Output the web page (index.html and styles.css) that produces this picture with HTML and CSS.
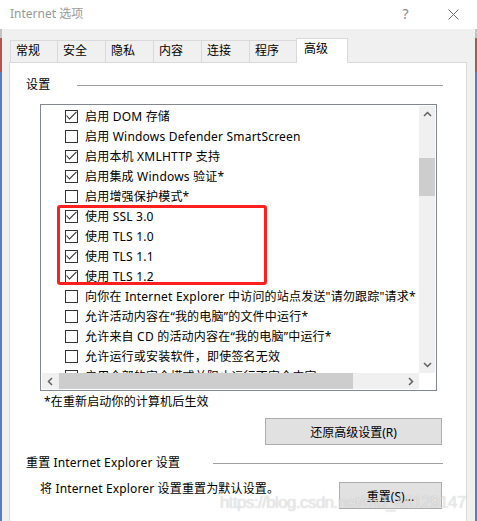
FILE: index.html
```html
<!DOCTYPE html>
<html lang="zh-CN">
<head>
<meta charset="utf-8">
<title>Internet 选项</title>
<link rel="stylesheet" href="styles.css">
</head>
<body>
<div class="titlebar">
  <span class="title">Internet 选项</span>
  <span class="tb-btn help">?</span>
  <span class="tb-btn close"><svg width="11" height="11" viewBox="0 0 11 11"><path d="M0.5 0.5L10.5 10.5M10.5 0.5L0.5 10.5" stroke="#6d6d6d" stroke-width="1" fill="none"/></svg></span>
</div>
<div class="frame">
  <div class="tabs">
    <div class="tab w48">常规</div>
    <div class="tab">安全</div>
    <div class="tab">隐私</div>
    <div class="tab">内容</div>
    <div class="tab">连接</div>
    <div class="tab w48">程序</div>
    <div class="tab active">高级</div>
  </div>
  <div class="panel">
    <div class="group"><span>设置</span><div class="rule rule-a"></div></div>
    <div class="listbox">
      <div class="list-main">
        <div class="rows">
          <div class="row"><span class="cb on"><svg width="11" height="11" viewBox="0 0 11 11"><polyline points="0.5,4.5 3.5,8 10.5,0.8" fill="none" stroke="#333" stroke-width="1.1"/></svg></span>启用 DOM 存储</div>
          <div class="row"><span class="cb"></span>启用 Windows Defender SmartScreen</div>
          <div class="row"><span class="cb on"><svg width="11" height="11" viewBox="0 0 11 11"><polyline points="0.5,4.5 3.5,8 10.5,0.8" fill="none" stroke="#333" stroke-width="1.1"/></svg></span>启用本机 XMLHTTP 支持</div>
          <div class="row"><span class="cb on"><svg width="11" height="11" viewBox="0 0 11 11"><polyline points="0.5,4.5 3.5,8 10.5,0.8" fill="none" stroke="#333" stroke-width="1.1"/></svg></span>启用集成 Windows 验证*</div>
          <div class="row"><span class="cb"></span>启用增强保护模式*</div>
          <div class="row"><span class="cb on"><svg width="11" height="11" viewBox="0 0 11 11"><polyline points="0.5,4.5 3.5,8 10.5,0.8" fill="none" stroke="#333" stroke-width="1.1"/></svg></span>使用 SSL 3.0</div>
          <div class="row"><span class="cb on"><svg width="11" height="11" viewBox="0 0 11 11"><polyline points="0.5,4.5 3.5,8 10.5,0.8" fill="none" stroke="#333" stroke-width="1.1"/></svg></span>使用 TLS 1.0</div>
          <div class="row"><span class="cb on"><svg width="11" height="11" viewBox="0 0 11 11"><polyline points="0.5,4.5 3.5,8 10.5,0.8" fill="none" stroke="#333" stroke-width="1.1"/></svg></span>使用 TLS 1.1</div>
          <div class="row"><span class="cb on"><svg width="11" height="11" viewBox="0 0 11 11"><polyline points="0.5,4.5 3.5,8 10.5,0.8" fill="none" stroke="#333" stroke-width="1.1"/></svg></span>使用 TLS 1.2</div>
          <div class="row"><span class="cb"></span>向你在 Internet Explorer 中访问的站点发送"请勿跟踪"请求*</div>
          <div class="row"><span class="cb"></span>允许活动内容在“我的电脑”的文件中运行*</div>
          <div class="row"><span class="cb"></span>允许来自 CD 的活动内容在“我的电脑”中运行*</div>
          <div class="row"><span class="cb"></span>允许运行或安装软件，即使签名无效</div>
          <div class="row"><span class="cb"></span>启用全部的安全模式并阻止运行不安全内容</div>
        </div>
        <div class="vbar">
          <div class="arrow"><svg width="9" height="6" viewBox="0 0 9 6"><polyline points="1,5 4.5,1.5 8,5" fill="none" stroke="#606060" stroke-width="1.5"/></svg></div>
          <div class="vtrack"><div class="vthumb"></div></div>
          <div class="arrow"><svg width="9" height="6" viewBox="0 0 9 6"><polyline points="1,1 4.5,4.5 8,1" fill="none" stroke="#606060" stroke-width="1.5"/></svg></div>
        </div>
      </div>
      <div class="hbar-row">
        <div class="hbar">
          <div class="arrow"><svg width="6" height="9" viewBox="0 0 6 9"><polyline points="5,1 1.5,4.5 5,8" fill="none" stroke="#606060" stroke-width="1.5"/></svg></div>
          <div class="htrack"><div class="hthumb"></div></div>
          <div class="arrow"><svg width="6" height="9" viewBox="0 0 6 9"><polyline points="1,1 4.5,4.5 1,8" fill="none" stroke="#606060" stroke-width="1.5"/></svg></div>
        </div>
        <div class="corner"></div>
      </div>
      <div class="highlight"></div>
    </div>
    <div class="note">*在重新启动你的计算机后生效</div>
    <div class="btn-row"><button class="btn btn-restore">还原高级设置(R)</button></div>
    <div class="group group-2"><span>重置 Internet Explorer 设置</span><div class="rule rule-b"></div></div>
    <div class="reset-row"><span class="reset-text">将 Internet Explorer 设置重置为默认设置。</span><button class="btn btn-reset">重置(S)...</button></div>
    <div class="watermark">https://blog.csdn.net/m0_48129147</div>
  </div>
</div>
</body>
</html>
```
FILE: styles.css
```css
* { box-sizing: border-box; }
html, body { margin: 0; height: 100%; }
body {
  overflow: hidden;
  font-family: "Noto Sans", "Noto Sans CJK SC", sans-serif;
  font-size: 12px;
  color: #000;
  background: linear-gradient(to bottom, #ffffff 0, #ffffff 29px, #c4c4c4 29px, #c4c4c4 38px, #b0564c 38px, #b0564c 72px, #5d7db6 72px, #5d7db6 100%);
}
.titlebar {
  height: 29px;
  background: #fff;
  display: flex;
  align-items: center;
  padding-left: 10px;
}
.title { color: #999; line-height: 16px; margin-top: -1px; }
.tb-btn {
  width: 46px;
  height: 29px;
  display: flex;
  align-items: center;
  justify-content: center;
  color: #8a8a8a;
}
.help { margin-left: auto; font-size: 14px; padding-bottom: 2px; padding-right: 3px; }
.close { margin-right: 1px; padding-bottom: 1px; }
.frame {
  margin: 0 2px;
  height: calc(100% - 29px);
  background: #f0f0f0;
  padding: 9px 8px 0 7px;
}
.tabs {
  display: flex;
  align-items: flex-end;
  height: 24px;
  margin-left: 1px;
  position: relative;
  z-index: 1;
}
.tab {
  width: 49px;
  height: 22px;
  border: 1px solid #d9d9d9;
  border-bottom: none;
  margin-right: -1px;
  padding-left: 5px;
  line-height: 20px;
  background: #f0f0f0;
  white-space: nowrap;
}
.tab.w48 { width: 48px; }
.tab.active {
  width: 52px;
  height: 25px;
  margin-bottom: -1px;
  background: #fff;
  padding-left: 7px;
}
.panel {
  position: relative;
  height: 470px;
  background: #fff;
  border: 1px solid #d9d9d9;
  padding: 0 23px 0 16px;
}
.group {
  display: flex;
  align-items: center;
  height: 16px;
  line-height: 16px;
  margin-top: 14px;
  white-space: nowrap;
  letter-spacing: 0.15px;
}
.rule { flex: 1; height: 1px; background: #a0a0a0; }
.rule-a { margin-left: 27px; }
.rule-b { margin-left: 33px; }
.listbox {
  position: relative;
  width: 397px;
  height: 287px;
  margin: 11px 0 0 14px;
  border: 1px solid #828790;
  padding: 1px;
  background: #fff;
}
.list-main { display: flex; height: 267px; }
.rows { width: 377px; height: 267px; overflow: hidden; }
.row {
  height: 20px;
  display: flex;
  align-items: center;
  padding-left: 23px;
  white-space: nowrap;
  letter-spacing: 0.2px;
}
.cb {
  flex: none;
  width: 13px;
  height: 13px;
  border: 1px solid #333;
  margin-right: 7px;
  background: #fff;
  display: flex;
}
.vbar {
  width: 16px;
  background: #f0f0f0;
  display: flex;
  flex-direction: column;
}
.arrow {
  flex: none;
  width: 16px;
  height: 16px;
  display: flex;
  align-items: center;
  justify-content: center;
}
.vtrack { flex: 1; padding-top: 36px; }
.vthumb { height: 38px; background: #cdcdcd; }
.hbar-row { display: flex; height: 16px; }
.hbar { width: 377px; display: flex; background: #f0f0f0; }
.htrack { flex: 1; padding-left: 1px; }
.hthumb { width: 294px; height: 16px; background: #cdcdcd; }
.corner { width: 16px; background: #fff; }
.highlight {
  position: absolute;
  left: 16px;
  top: 100px;
  width: 210px;
  height: 80px;
  border: 3px solid #ff1f1f;
  border-radius: 3px;
}
.note {
  margin: 3px 0 0 18px;
  line-height: 16px;
  letter-spacing: 0.15px;
}
.btn-row { display: flex; justify-content: flex-end; margin-top: 8px; padding-right: 1px; }
.btn {
  height: 27px;
  padding: 0;
  background: #e1e1e1;
  border: 1px solid #adadad;
  font-family: inherit;
  font-size: 12px;
  color: #000;
}
.btn-restore { width: 177px; }
.group-2 { margin-top: 10px; }
.reset-row {
  display: flex;
  align-items: flex-start;
  margin-top: 11px;
  height: 27px;
  padding-right: 1px;
}
.reset-text { margin: -1px 0 0 14px; line-height: 16px; white-space: nowrap; letter-spacing: 0.15px; }
.btn-reset { width: 103px; margin-left: auto; }
.watermark {
  position: absolute;
  left: 210px;
  top: 431px;
  font-family: "Liberation Sans", Arial, sans-serif;
  font-size: 17px;
  line-height: 17px;
  letter-spacing: -0.6px;
  white-space: nowrap;
  color: rgba(255, 255, 255, 0.6);
  text-shadow: 0 0 1px rgba(110, 110, 110, 0.45);
  pointer-events: none;
}
```
